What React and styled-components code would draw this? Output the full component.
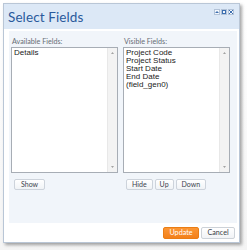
import React from "react";
import styled, { createGlobalStyle } from "styled-components";

const GlobalStyle = createGlobalStyle`
  html, body {
    margin: 0;
    padding: 0;
    background: #f6f6f6;
  }
  * {
    box-sizing: border-box;
  }
`;

const Page = styled.div`
  width: 247px;
  height: 250px;
  padding: 3px 0 0 3px;
  background: linear-gradient(#ffffff, #f4f4f4);
`;

const Dialog = styled.div`
  display: flex;
  flex-direction: column;
  width: 237px;
  height: 240px;
  border: 1px solid #b9c6d6;
  background: #ffffff;
  box-shadow: 2px 2px 3px rgba(0, 0, 0, 0.35);
`;

const Header = styled.div`
  display: flex;
  align-items: center;
  justify-content: space-between;
  height: 25px;
  padding: 0 5px 0 4px;
  background: #dce8f6;
`;

const Title = styled.h1`
  margin: 0;
  font-family: "Lato", sans-serif;
  font-size: 13.5px;
  font-weight: 400;
  color: #2a5a9c;
  letter-spacing: 0.1px;
`;

const Controls = styled.div`
  display: flex;
  gap: 1px;
  align-self: flex-start;
  margin-top: 5px;
`;

const ControlBox = styled.div`
  display: flex;
  align-items: center;
  justify-content: center;
  width: 6px;
  height: 6px;
  background: #f2f6fb;
  border: 1px solid #b3c3d8;
`;

const Body = styled.div`
  flex: 1;
  display: flex;
  padding: 2px 2px 0 5px;
`;

const Panel = styled.div`
  flex: 1;
  display: grid;
  grid-template-columns: 107px 107px;
  column-gap: 5px;
  align-content: start;
  padding: 5px 7px 0 2px;
  background: #f1f5fa;
`;

const Column = styled.div`
  display: flex;
  flex-direction: column;
`;

const Label = styled.div`
  font-family: "Lato", sans-serif;
  font-size: 7.2px;
  line-height: 11px;
  color: #676d75;
  padding-left: 1px;
`;

const ListBox = styled.div`
  display: flex;
  height: 126px;
  border: 1px solid #a7adb5;
  background: #ffffff;
`;

const Items = styled.ul`
  flex: 1;
  margin: 0;
  padding: 1px 0 0 2px;
  list-style: none;
`;

const Item = styled.li`
  font-family: "Liberation Sans", Arial, sans-serif;
  font-size: 8px;
  line-height: 8px;
  color: #222222;
  white-space: nowrap;
`;

const ScrollBar = styled.div`
  display: flex;
  flex-direction: column;
  justify-content: space-between;
  align-items: center;
  width: 10px;
  padding: 4px 0;
  background: #f3f3f3;
  border-left: 1px solid #e8e8e8;
`;

const ButtonRow = styled.div`
  display: flex;
  gap: 2px;
  margin-top: 6px;
  padding-left: 3px;
`;

const Button = styled.button`
  height: 11px;
  padding: 0 ${(p) => p.$pad || 5}px;
  border: 1px solid #cdd3db;
  border-radius: 2px;
  background: linear-gradient(#ffffff, #f0f3f6);
  font-family: "Lato", sans-serif;
  font-size: 7px;
  line-height: 9px;
  color: #3d434c;
  cursor: pointer;
`;

const Footer = styled.div`
  display: flex;
  justify-content: flex-end;
  align-items: flex-start;
  gap: 2px;
  height: 19px;
  padding: 4px 4px 0 0;
`;

const FooterButton = styled.button`
  width: ${(p) => p.$w}px;
  height: 12px;
  padding: 0;
  border: 1px solid ${(p) => (p.$primary ? "#ea7d14" : "#cdd2d8")};
  border-radius: 2px;
  background: ${(p) =>
    p.$primary ? "linear-gradient(#fb9634, #f3801a)" : "linear-gradient(#ffffff, #f1f3f6)"};
  font-family: "Lato", sans-serif;
  font-size: 7.2px;
  line-height: 10px;
  color: ${(p) => (p.$primary ? "#ffffff" : "#3a3f46")};
  cursor: pointer;
`;

const Arrow = ({ up }) => (
  <svg width="3" height="2" viewBox="0 0 3 2">
    <path d={up ? "M0 2 L1.5 0 L3 2 Z" : "M0 0 L1.5 2 L3 0 Z"} fill="#a3a3a3" />
  </svg>
);

const List = ({ items }) => (
  <ListBox>
    <Items>
      {items.map((item) => (
        <Item key={item}>{item}</Item>
      ))}
    </Items>
    <ScrollBar>
      <Arrow up />
      <Arrow />
    </ScrollBar>
  </ListBox>
);

const App = () => (
  <Page>
    <GlobalStyle />
    <Dialog>
      <Header>
        <Title>Select Fields</Title>
        <Controls>
          <ControlBox>
            <svg width="4" height="4" viewBox="0 0 4 4">
              <path d="M0 3 L2 1 L4 3 Z" fill="#3d6fb0" />
            </svg>
          </ControlBox>
          <ControlBox>
            <svg width="4" height="4" viewBox="0 0 4 4">
              <rect x="0.5" y="0.5" width="3" height="3" fill="none" stroke="#3d6fb0" strokeWidth="1" />
            </svg>
          </ControlBox>
          <ControlBox>
            <svg width="4" height="4" viewBox="0 0 4 4">
              <path d="M0 0 L4 4 M4 0 L0 4" stroke="#3d6fb0" strokeWidth="1" />
            </svg>
          </ControlBox>
        </Controls>
      </Header>
      <Body>
        <Panel>
          <Column>
            <Label>Available Fields:</Label>
            <List items={["Details"]} />
            <ButtonRow>
              <Button $pad={6}>Show</Button>
            </ButtonRow>
          </Column>
          <Column>
            <Label>Visible Fields:</Label>
            <List
              items={[
                "Project Code",
                "Project Status",
                "Start Date",
                "End Date",
                "(field_gen0)",
              ]}
            />
            <ButtonRow>
              <Button>Hide</Button>
              <Button $pad={4}>Up</Button>
              <Button>Down</Button>
            </ButtonRow>
          </Column>
        </Panel>
      </Body>
      <Footer>
        <FooterButton $primary $w={36}>
          Update
        </FooterButton>
        <FooterButton $w={34}>Cancel</FooterButton>
      </Footer>
    </Dialog>
  </Page>
);

export default App;
